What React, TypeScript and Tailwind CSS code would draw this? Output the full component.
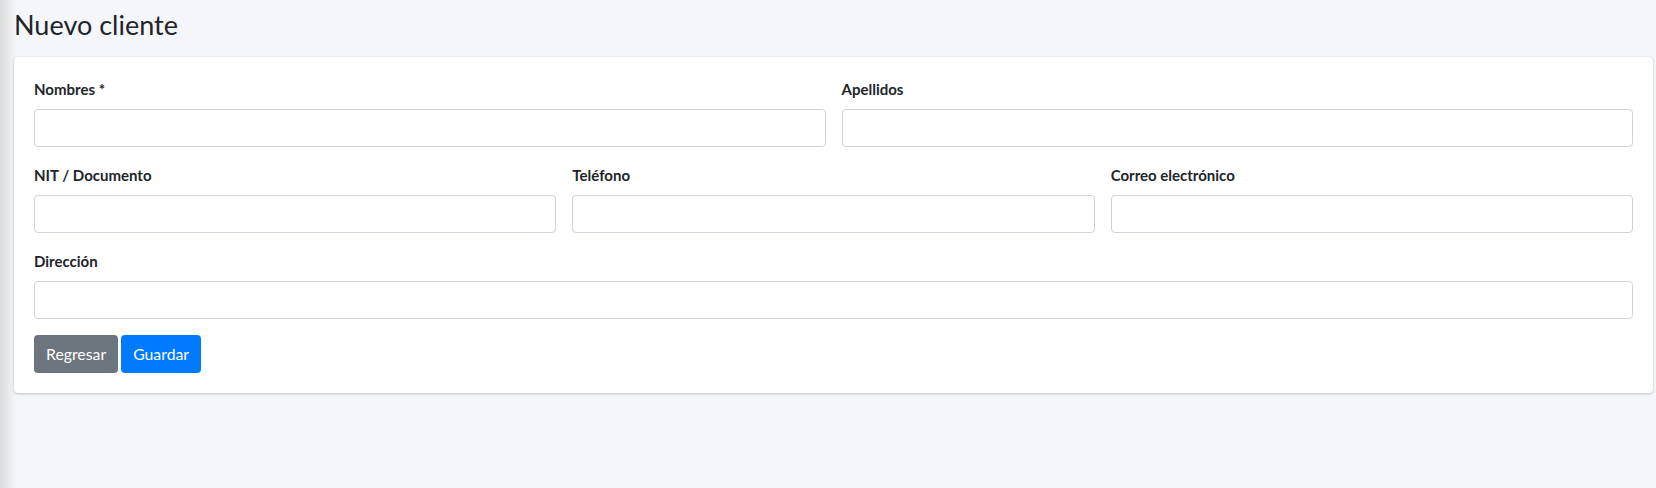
import React from "react";

const font = { fontFamily: "Lato, 'Noto Sans', sans-serif" };

function Field({ label }: { label: string }) {
  return (
    <div className="flex flex-col">
      <label className="mb-2 block text-[15px] leading-6 font-bold text-[#212529]">{label}</label>
      <input
        type="text"
        className="block h-[38px] w-full rounded-[4px] border border-[#ced4da] bg-white px-3 text-[16px] text-[#495057] outline-none"
      />
    </div>
  );
}

export default function App() {
  return (
    <div className="relative min-h-screen bg-[#f4f6f9] pl-[14px] pr-[3px]" style={font}>
      <div className="pointer-events-none absolute inset-y-0 left-0 w-[16px] bg-gradient-to-r from-[rgba(0,0,0,0.11)] to-transparent" />
      <h1 className="pt-[6px] pb-[14px] text-[27px] leading-[37px] font-normal text-[#212529]">Nuevo cliente</h1>
      <div className="rounded-[4px] bg-white p-5 shadow-[0_0_1px_rgba(0,0,0,0.125),0_1px_3px_rgba(0,0,0,0.2)]">
        <div className="grid grid-cols-2 gap-x-4 mb-4">
          <Field label="Nombres *" />
          <Field label="Apellidos" />
        </div>
        <div className="grid grid-cols-3 gap-x-4 mb-4">
          <Field label="NIT / Documento" />
          <Field label="Teléfono" />
          <Field label="Correo electrónico" />
        </div>
        <div className="mb-4">
          <Field label="Dirección" />
        </div>
        <div className="flex gap-[3px]">
          <button className="h-[38px] rounded-[4px] bg-[#6c757d] px-3 text-[15.8px] text-white">Regresar</button>
          <button className="h-[38px] rounded-[4px] bg-[#007bff] px-3 text-[15.8px] text-white">Guardar</button>
        </div>
      </div>
    </div>
  );
}
